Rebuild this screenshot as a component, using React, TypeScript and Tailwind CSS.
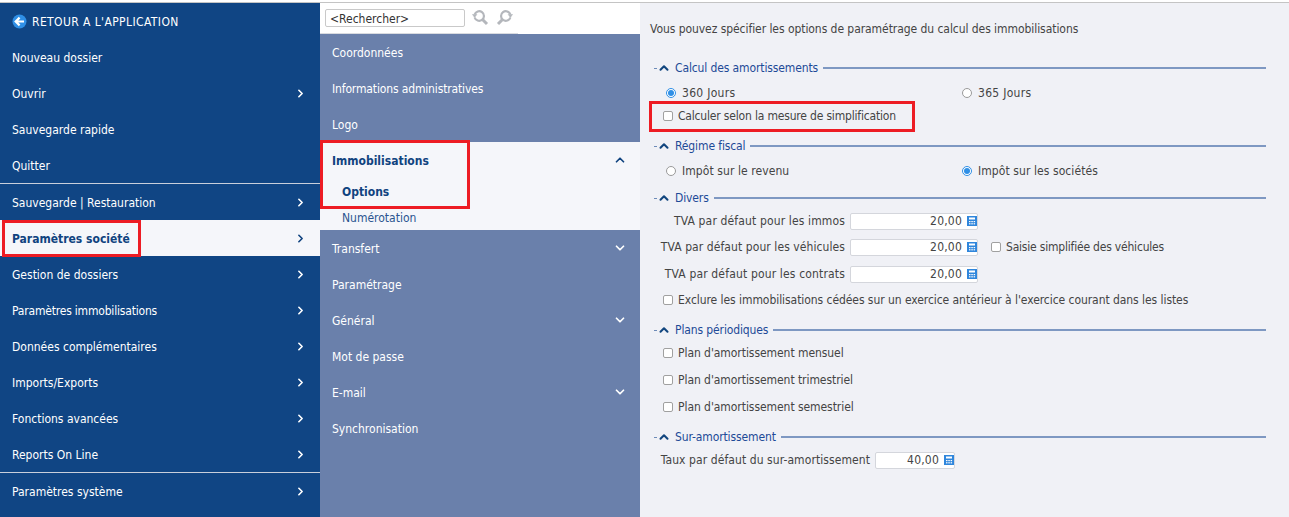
import { ChevronDown, ChevronRight, ChevronUp } from "lucide-react";

const font = "[font-family:'DejaVu_Sans_Condensed','DejaVu_Sans',sans-serif]";

function MainItem({ label, arrow, active, tight }: { label: string; arrow?: boolean; active?: boolean; tight?: boolean }) {
  return (
    <div
      className={`flex h-9 items-center justify-between pl-3 pr-[13px] text-xs ${
        active ? "bg-[#f5f6fa] font-bold text-[#10437f]" : "text-white"
      }`}
    >
      <span className={`pt-[2px] ${tight ? "tracking-[-0.19px]" : ""}`}>{label}</span>
      {arrow && <ChevronRight size={13} strokeWidth={3} />}
    </div>
  );
}

function SubItem({ label, arrow, tight }: { label: string; arrow?: boolean; tight?: boolean }) {
  return (
    <div className="flex h-9 items-center justify-between pl-3 pr-[13px] text-xs text-white">
      <span className={`pt-[2px] ${tight ? "tracking-[-0.14px]" : ""}`}>{label}</span>
      {arrow && <ChevronDown size={14} strokeWidth={3} />}
    </div>
  );
}

function Heading({ label, className }: { label: string; className: string }) {
  return (
    <div className={`flex h-4 items-center text-xs tracking-[-0.12px] text-[#1d4a97] ${className}`}>
      <span className="ml-[14px] h-px w-[3px] bg-[#6d8bb8]" />
      <ChevronUp size={14} strokeWidth={3.5} className="text-[#12467f]" />
      <span className="ml-[4px]">{label}</span>
      <span className="ml-[5px] mr-[23px] h-[2px] flex-1 bg-[#7e98c2]" />
    </div>
  );
}

function Radio({ label, on, className }: { label: string; on?: boolean; className?: string }) {
  return (
    <div className={`flex items-center gap-[6px] ${className ?? ""}`}>
      <span
        className={`flex h-[10px] w-[10px] items-center justify-center rounded-full border bg-white ${
          on ? "border-[#2f8fe6]" : "border-[#9a9a9a]"
        }`}
      >
        {on && <span className="h-[6px] w-[6px] rounded-full bg-[#2f8fe6]" />}
      </span>
      <span>{label}</span>
    </div>
  );
}

function Check({ label, className }: { label: string; className?: string }) {
  return (
    <div className={`flex items-center gap-[5px] ${className ?? ""}`}>
      <span className="h-[10px] w-[10px] rounded-[2px] border border-[#a0a0a0] bg-white" />
      <span>{label}</span>
    </div>
  );
}

function CalcIcon() {
  return (
    <svg width="10" height="10" viewBox="0 0 10 10" className="ml-[5px] shrink-0">
      <rect x="0" y="0" width="10" height="10" fill="#2f86dc" />
      <rect x="2" y="1.5" width="6" height="2" fill="#fff" />
      <rect x="2" y="5" width="1.5" height="1.2" fill="#fff" />
      <rect x="4.3" y="5" width="1.5" height="1.2" fill="#fff" />
      <rect x="6.6" y="5" width="1.5" height="1.2" fill="#fff" />
      <rect x="2" y="7.2" width="1.5" height="1.2" fill="#fff" />
      <rect x="4.3" y="7.2" width="1.5" height="1.2" fill="#fff" />
      <rect x="6.6" y="7.2" width="1.5" height="1.2" fill="#fff" />
    </svg>
  );
}

function NumberField({ value, width }: { value: string; width: string }) {
  return (
    <div className={`ml-[5px] flex h-[17px] items-center justify-end rounded-[2px] border border-[#d4d6dc] bg-white ${width}`}>
      <span className="tracking-[0.2px]">{value}</span>
      <CalcIcon />
    </div>
  );
}

// lens with a small turning arrow on its open side, as in the search buttons
function Magnifier({ flip }: { flip?: boolean }) {
  return (
    <svg width="17" height="17" viewBox="0 0 17 17" fill="none" stroke="#b4b7bc" strokeWidth="2.2">
      <g transform={flip ? "matrix(-1 0 0 1 17 0)" : undefined}>
        <path d="M2.6 5.5 A4.8 4.8 0 1 1 2.6 8.5" />
        <path d="M0.5 5.5 H4.8 L2.6 8.4 Z" fill="#b4b7bc" strokeWidth="0.6" />
        <path d="M10.5 10.5 L15 15" strokeWidth="3" />
      </g>
    </svg>
  );
}

export default function App() {
  return (
    <div className={`relative h-[517px] w-[1289px] overflow-hidden bg-white ${font}`}>
      <div className="h-[2px] bg-white" />
      <div className="h-px bg-[#c4c4c4]" />
      <div className="flex h-[514px]">
        <aside className="w-80 bg-[#104584]">
          <div className="flex h-9 items-center gap-[5px] pl-3 text-xs text-white">
            <svg width="15" height="15" viewBox="0 0 15 15">
              <circle cx="7.5" cy="7.5" r="7" fill="#2f8fe6" />
              <path d="M12 7.5H4M7.6 3.6 L3.7 7.5 L7.6 11.4" stroke="#fff" strokeWidth="2.2" fill="none" />
            </svg>
            <span className="pt-[2px] tracking-[0.4px]">RETOUR A L'APPLICATION</span>
          </div>
          <MainItem label="Nouveau dossier" />
          <MainItem label="Ouvrir" arrow />
          <MainItem label="Sauvegarde rapide" />
          <MainItem label="Quitter" />
          <div className="h-px bg-[#c9cfdb]" />
          <MainItem label="Sauvegarde | Restauration" arrow />
          <MainItem label="Paramètres société" arrow active />
          <MainItem label="Gestion de dossiers" arrow />
          <MainItem label="Paramètres immobilisations" arrow tight />
          <MainItem label="Données complémentaires" arrow />
          <MainItem label="Imports/Exports" arrow />
          <MainItem label="Fonctions avancées" arrow />
          <MainItem label="Reports On Line" arrow />
          <div className="h-px bg-[#c9cfdb]" />
          <MainItem label="Paramètres système" arrow />
        </aside>

        <nav className="w-80 bg-[#6a80ab]">
          <div className="relative flex h-[31px] items-center bg-white pb-[2px] pl-[5px]">
            <div className="flex h-[18px] w-[140px] items-center rounded-[2px] border border-[#c9c9c9] pl-1 pt-[2px] text-xs text-[#333]">
              &lt;Rechercher&gt;
            </div>
            <div className="ml-[7px] flex gap-[7px]">
              <Magnifier />
              <Magnifier flip />
            </div>
            <div className="absolute bottom-0 left-0 h-px w-[198px] bg-[#d9dbe0]" />
          </div>
          <SubItem label="Coordonnées" />
          <SubItem label="Informations administratives" tight />
          <SubItem label="Logo" />
          <div className="h-[88px] bg-[#f5f6fa] text-xs text-[#10437f]">
            <div className="flex h-9 items-center justify-between pl-3 pr-[13px] font-bold">
              <span className="pt-[2px]">Immobilisations</span>
              <ChevronUp size={14} strokeWidth={3} />
            </div>
            <div className="flex h-[26px] items-center border-l-[2px] border-[#f5a800] pl-5 pt-[2px] font-bold">Options</div>
            <div className="flex h-[26px] items-center pl-[22px] pt-[2px] text-[#2b5590]">Numérotation</div>
          </div>
          <SubItem label="Transfert" arrow />
          <SubItem label="Paramétrage" />
          <SubItem label="Général" arrow />
          <SubItem label="Mot de passe" />
          <SubItem label="E-mail" arrow />
          <SubItem label="Synchronisation" />
        </nav>

        <main className="flex-1 bg-[#f0f1f6] text-xs tracking-[-0.06px] text-[#444]">
          <div className="ml-[10px] mt-[17px] flex h-[18px] items-center">
            Vous pouvez spécifier les options de paramétrage du calcul des immobilisations
          </div>

          <Heading label="Calcul des amortissements" className="mt-[22px]" />
          <div className="mt-2 flex h-[18px] items-center pl-[26px] tracking-[0.3px]">
            <Radio label="360 Jours" on className="w-[296px]" />
            <Radio label="365 Jours" />
          </div>
          <Check
            label="Calculer selon la mesure de simplification"
            className="ml-[23px] mt-[5px] h-[18px] tracking-[-0.18px]"
          />

          <Heading label="Régime fiscal" className="mt-[13px]" />
          <div className="mt-2 flex h-[18px] items-center pl-[26px] tracking-[0.08px]">
            <Radio label="Impôt sur le revenu" className="w-[296px]" />
            <Radio label="Impôt sur les sociétés" on />
          </div>

          <Heading label="Divers" className="mt-[10px]" />
          <div className="mt-[6px] flex h-[18px] items-center">
            <span className="w-[205px] text-right tracking-[0.14px]">TVA par défaut pour les immos</span>
            <NumberField value="20,00" width="w-[128px]" />
          </div>
          <div className="mt-2 flex h-[18px] items-center">
            <span className="w-[205px] text-right tracking-[0.08px]">TVA par défaut pour les véhicules</span>
            <NumberField value="20,00" width="w-[128px]" />
            <Check label="Saisie simplifiée des véhicules" className="ml-[13px] tracking-[-0.2px]" />
          </div>
          <div className="mt-[9px] flex h-[18px] items-center">
            <span className="w-[205px] text-right tracking-[0.16px]">TVA par défaut pour les contrats</span>
            <NumberField value="20,00" width="w-[128px]" />
          </div>
          <Check
            label="Exclure les immobilisations cédées sur un exercice antérieur à l'exercice courant dans les listes"
            className="ml-[23px] mt-2 h-[18px]"
          />

          <Heading label="Plans périodiques" className="mt-[13px]" />
          <Check label="Plan d'amortissement mensuel" className="ml-[23px] mt-[6px] h-[18px]" />
          <Check label="Plan d'amortissement trimestriel" className="ml-[23px] mt-[9px] h-[18px]" />
          <Check label="Plan d'amortissement semestriel" className="ml-[23px] mt-[9px] h-[18px]" />

          <Heading label="Sur-amortissement" className="mt-[13px]" />
          <div className="mt-[6px] flex h-[18px] items-center">
            <span className="w-[230px] text-right tracking-[0.08px]">Taux par défaut du sur-amortissement</span>
            <NumberField value="40,00" width="w-[80px]" />
          </div>
        </main>
      </div>

      {/* annotation boxes drawn over the screenshot */}
      <div className="absolute left-[2px] top-[220px] h-[37px] w-[139px] border-[3px] border-[#ed1c24]" />
      <div className="absolute left-[320px] top-[140px] h-[69px] w-[150px] border-[3px] border-[#ed1c24]" />
      <div className="absolute left-[649px] top-[101px] h-[31px] w-[266px] border-[3px] border-[#ed1c24]" />
    </div>
  );
}
